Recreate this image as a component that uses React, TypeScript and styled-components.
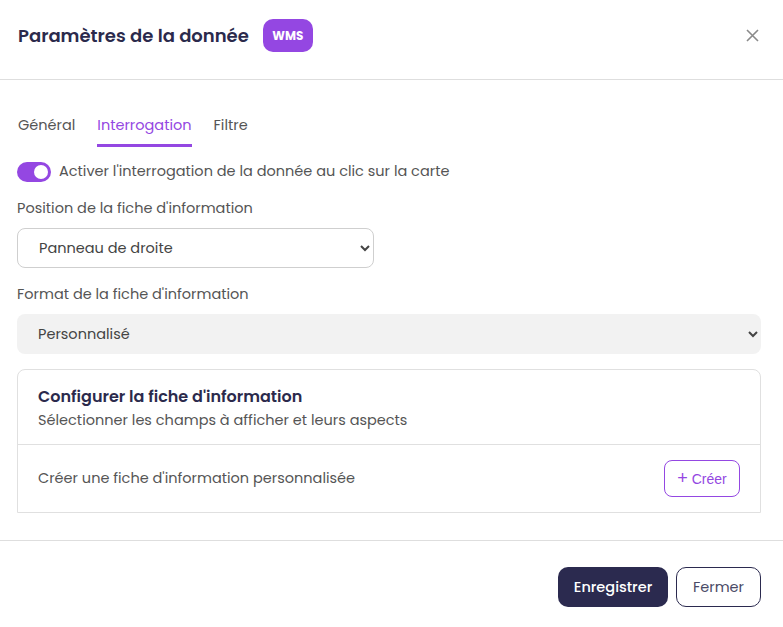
import React from 'react';
import styled, {createGlobalStyle} from "styled-components";

const GlobalStyle = createGlobalStyle`
    html, body {
        margin: 0;
        padding: 0;
        background: #ffffff;
        font-family: "Poppins", "Inter", "Noto Sans", sans-serif;
        color: #4a4a4a;
    }
    * {
        box-sizing: border-box;
    }
`

const App = () => {
    return (
        <>
            <GlobalStyle/>
            <Dialog>
                <Header>
                    <TitleGroup>
                        <Title>Paramètres de la donnée</Title>
                        <Badge>WMS</Badge>
                    </TitleGroup>
                    <CloseButton aria-label="Fermer">
                        <svg width="13" height="13" viewBox="0 0 13 13">
                            <path d="M1 1 L12 12 M12 1 L1 12" stroke="#8a8a8a" strokeWidth="1.6" fill="none"/>
                        </svg>
                    </CloseButton>
                </Header>
                <Body>
                    <Tabs>
                        <Tab>Général</Tab>
                        <Tab $active>Interrogation</Tab>
                        <Tab>Filtre</Tab>
                    </Tabs>
                    <SwitchRow>
                        <Switch>
                            <Knob/>
                        </Switch>
                        <SwitchLabel>Activer l'interrogation de la donnée au clic sur la carte</SwitchLabel>
                    </SwitchRow>
                    <Field>
                        <Label>Position de la fiche d'information</Label>
                        <Select $width="357px" defaultValue="droite">
                            <option value="droite">Panneau de droite</option>
                            <option value="gauche">Panneau de gauche</option>
                        </Select>
                    </Field>
                    <Field>
                        <Label>Format de la fiche d'information</Label>
                        <Select $filled defaultValue="perso">
                            <option value="perso">Personnalisé</option>
                        </Select>
                    </Field>
                    <Card>
                        <CardHead>
                            <CardTitle>Configurer la fiche d'information</CardTitle>
                            <CardSubtitle>Sélectionner les champs à afficher et leurs aspects</CardSubtitle>
                        </CardHead>
                        <CardRow>
                            <RowText>Créer une fiche d'information personnalisée</RowText>
                            <CreateButton>
                                <span>+</span> Créer
                            </CreateButton>
                        </CardRow>
                    </Card>
                </Body>
                <Footer>
                    <PrimaryButton>Enregistrer</PrimaryButton>
                    <SecondaryButton>Fermer</SecondaryButton>
                </Footer>
            </Dialog>
        </>
    );
};

export default App;

const Dialog = styled.div`
    width: 783px;
    min-height: 627px;
    display: flex;
    flex-direction: column;
    background: #fff;
`
const Header = styled.div`
    height: 80px;
    display: flex;
    align-items: center;
    justify-content: space-between;
    padding: 0 24px 8px 18px;
    border-bottom: 1px solid #dedede;
`
const TitleGroup = styled.div`
    display: flex;
    align-items: center;
    gap: 14px;
`
const Title = styled.h1`
    margin: 0;
    font-size: 18px;
    font-weight: 600;
    color: #2b2a4c;
`
const Badge = styled.span`
    display: inline-flex;
    align-items: center;
    justify-content: center;
    width: 50px;
    height: 33px;
    border-radius: 10px;
    background: #9447e2;
    color: #fff;
    font-size: 12px;
    font-weight: 700;
`
const CloseButton = styled.button`
    border: none;
    background: none;
    padding: 0;
    display: flex;
    cursor: pointer;
`
const Body = styled.div`
    padding: 35px 22px 27px 17px;
    display: flex;
    flex-direction: column;
`
const Tabs = styled.div`
    display: flex;
    gap: 22px;
    padding-left: 1px;
`
const Tab = styled.div<{ $active?: boolean }>`
    font-size: 14.5px;
    padding-bottom: 8px;
    color: ${p => p.$active ? '#9447e2' : '#555'};
    border-bottom: 3px solid ${p => p.$active ? '#9447e2' : 'transparent'};
`
const SwitchRow = styled.div`
    display: flex;
    align-items: center;
    gap: 8px;
    margin-top: 14px;
`
const Switch = styled.div`
    width: 34px;
    height: 20px;
    border-radius: 10px;
    background: #9447e2;
    position: relative;
`
const Knob = styled.span`
    position: absolute;
    top: 3px;
    right: 3px;
    width: 14px;
    height: 14px;
    border-radius: 50%;
    background: #fff;
`
const SwitchLabel = styled.span`
    font-size: 14.5px;
    color: #555;
`
const Field = styled.div`
    display: flex;
    flex-direction: column;
    gap: 9px;
    margin-top: 16px;
`
const Label = styled.label`
    font-size: 14.5px;
    color: #555;
`
const Select = styled.select<{ $width?: string; $filled?: boolean }>`
    width: ${p => p.$width || '100%'};
    height: 40px;
    padding: 0 10px 0 17px;
    border-radius: 8px;
    border: ${p => p.$filled ? 'none' : '1px solid #cfcfcf'};
    background-color: ${p => p.$filled ? '#f2f2f2' : '#fff'};
    font-family: inherit;
    font-size: 14.5px;
    color: #444;
`
const Card = styled.div`
    margin-top: 15px;
    border: 1px solid #e0e0e0;
    border-radius: 8px 8px 0 0;
    display: flex;
    flex-direction: column;
`
const CardHead = styled.div`
    padding: 14px 20px 13px 20px;
    border-bottom: 1px solid #e0e0e0;
    display: flex;
    flex-direction: column;
    gap: 1px;
`
const CardTitle = styled.h2`
    margin: 0;
    font-size: 16px;
    font-weight: 600;
    color: #2b2a4c;
`
const CardSubtitle = styled.p`
    margin: 0;
    font-size: 14.5px;
    color: #555;
`
const CardRow = styled.div`
    height: 67px;
    display: flex;
    align-items: center;
    justify-content: space-between;
    padding: 0 20px;
`
const RowText = styled.span`
    font-size: 14.5px;
    color: #555;
`
const CreateButton = styled.button`
    width: 76px;
    height: 37px;
    border: 1px solid #9447e2;
    border-radius: 8px;
    background: #fff;
    color: #9447e2;
    font-family: "Liberation Sans", Arial, sans-serif;
    font-size: 14px;
    display: flex;
    align-items: center;
    justify-content: center;
    gap: 4px;
    span {
        font-size: 18px;
        font-weight: 300;
    }
`
const Footer = styled.div`
    border-top: 1px solid #dedede;
    display: flex;
    justify-content: flex-end;
    gap: 8px;
    padding: 26px 22px 20px 0;
`
const PrimaryButton = styled.button`
    width: 110px;
    height: 40px;
    border: none;
    border-radius: 10px;
    background: #2b2a4f;
    color: #fff;
    font-family: inherit;
    font-size: 14.5px;
    font-weight: 500;
`
const SecondaryButton = styled.button`
    width: 85px;
    height: 40px;
    border: 1px solid #2b2a4f;
    border-radius: 10px;
    background: #fff;
    color: #4a4a66;
    font-family: inherit;
    font-size: 14.5px;
`
